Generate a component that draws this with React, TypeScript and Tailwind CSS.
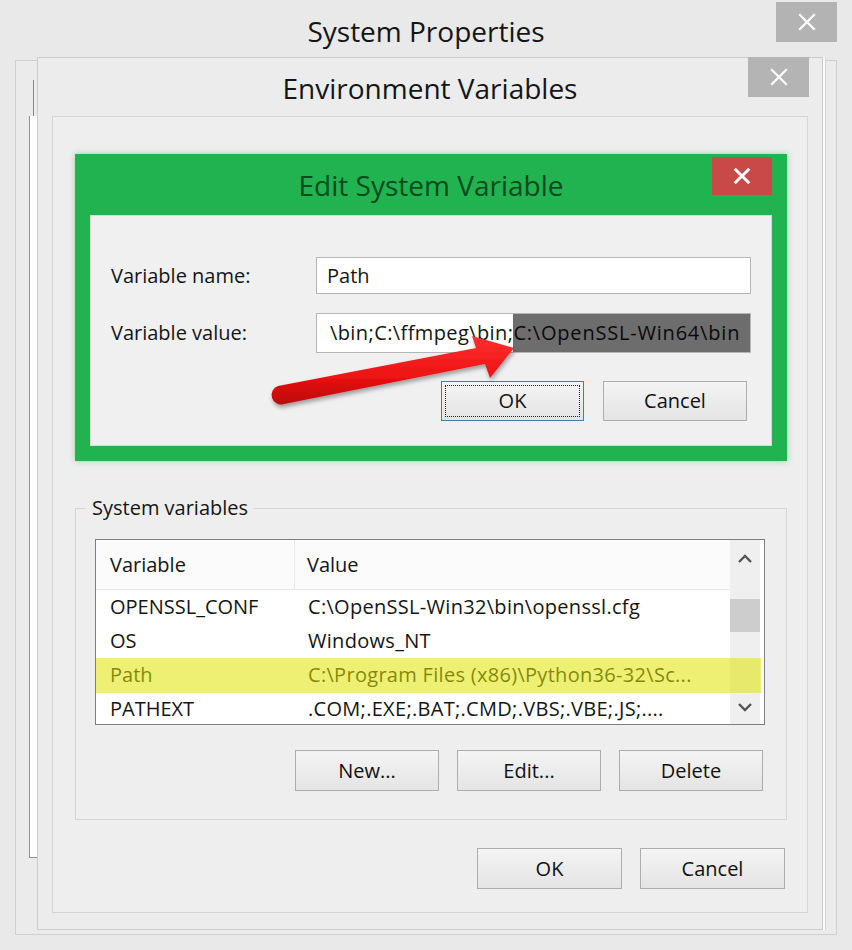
import React from 'react';

const FONT = "font-['Open_Sans','Noto_Sans',sans-serif]";

const CloseX: React.FC<{ size: number; stroke: number }> = ({ size, stroke }) => (
  <svg width={size} height={size} viewBox="0 0 20 20">
    <path d="M3 3 L17 17 M17 3 L3 17" stroke="#ffffff" strokeWidth={stroke} strokeLinecap="square" fill="none" />
  </svg>
);

const WinButton: React.FC<{ label: string; className?: string }> = ({ label, className = '' }) => (
  <div
    className={`flex items-center justify-center border border-[#adadad] bg-gradient-to-b from-[#f4f4f4] to-[#e4e4e4] text-[20px] text-[#111] ${className}`}
  >
    {label}
  </div>
);

const rows = [
  { name: 'OPENSSL_CONF', value: 'C:\\OpenSSL-Win32\\bin\\openssl.cfg' },
  { name: 'OS', value: 'Windows_NT' },
  { name: 'Path', value: 'C:\\Program Files (x86)\\Python36-32\\Sc...' },
  { name: 'PATHEXT', value: '.COM;.EXE;.BAT;.CMD;.VBS;.VBE;.JS;....' },
];

const EditDialog: React.FC = () => (
  <div className="relative w-[712px] h-[307px] bg-[#21b34f] flex flex-col px-[15px] pb-[15px] shadow-[0_0_6px_rgba(40,180,80,0.45)]">
    <div className="h-[61px] flex items-center justify-center text-[28px] text-[#0c4a20]">
      Edit System Variable
    </div>
    <div className="absolute right-[15px] top-[3px] w-[60px] h-[38px] bg-[#c94848] flex items-center justify-center">
      <CloseX size={18} stroke={3.2} />
    </div>
    <div className="flex-1 bg-[#f0f0f0] border border-[#d8d8d8] pl-[20px] pr-[20px] pt-[41px] flex flex-col">
      <div className="flex items-center h-[37px]">
        <div className="w-[205px] text-[20px]">Variable name:</div>
        <div className="flex-1 h-full bg-white border border-[#b5b5b5] flex items-center px-[10px] text-[20px]">
          Path
        </div>
      </div>
      <div className="flex items-center h-[40px] mt-[19px]">
        <div className="w-[205px] text-[20px]">Variable value:</div>
        <div className="flex-1 h-full bg-white border border-[#b5b5b5] flex overflow-hidden whitespace-nowrap text-[20px] pl-[13px]">
          <span className="self-center tracking-[0.4px]">\bin;C:\ffmpeg\bin;</span>
          <span className="flex-1 h-full bg-[#6d6d6d] text-[#0a0a0a] flex items-center tracking-[0.8px]">
            C:\OpenSSL-Win64\bin
          </span>
        </div>
      </div>
      <div className="flex justify-end gap-[19px] mt-[28px] mr-[4px]">
        <div className="w-[143px] h-[40px] border border-[#3d7fb5] bg-gradient-to-b from-[#f4f4f4] to-[#e4e4e4] p-[3px]">
          <div className="w-full h-full border border-dotted border-[#222] flex items-center justify-center text-[20px]">
            OK
          </div>
        </div>
        <WinButton label="Cancel" className="w-[144px] h-[40px]" />
      </div>
    </div>
  </div>
);

const SystemVariables: React.FC = () => (
  <div className="relative w-[712px] h-[312px] border border-[#d6d6d6] mt-[47px] flex flex-col">
    <div className="absolute left-[10px] top-[-15px] px-[6px] bg-[#eeeeee] text-[20px] leading-[28px]">
      System variables
    </div>
    <div className="relative ml-[19px] mt-[30px] w-[670px] h-[186px] border border-[#7f7f7f] bg-white flex overflow-hidden">
      <div className="flex-1 flex flex-col">
        <div className="h-[50px] flex border-b border-[#e6e6e6] bg-[#fbfbfb] text-[20px] shrink-0">
          <div className="w-[199px] border-r border-[#e6e6e6] pl-[14px] flex items-center">Variable</div>
          <div className="flex-1 pl-[12px] flex items-center">Value</div>
        </div>
        {rows.map((r) => (
          <div key={r.name} className="h-[34px] flex items-center text-[20px] whitespace-nowrap shrink-0">
            <div className="w-[199px] pl-[14px]">{r.name}</div>
            <div className="flex-1 pl-[13px] tracking-[0.3px]">{r.value}</div>
          </div>
        ))}
      </div>
      <div className="w-[30px] mr-[4px] bg-[#efefef] flex flex-col items-center">
        <svg className="mt-[14px]" width="16" height="10" viewBox="0 0 16 10">
          <path d="M2 8 L8 2 L14 8" stroke="#555" strokeWidth="2.4" fill="none" />
        </svg>
        <div className="mt-[35px] w-full h-[33px] bg-[#cdcdcd]" />
        <svg className="mt-[70px]" width="16" height="10" viewBox="0 0 16 10">
          <path d="M2 2 L8 8 L14 2" stroke="#555" strokeWidth="2.4" fill="none" />
        </svg>
      </div>
      {/* yellow marker over the Path row */}
      <div className="absolute left-0 top-[118px] w-[665px] h-[35px] bg-[#e0e400]/55" />
    </div>
    <div className="flex justify-end gap-[18px] mt-[25px] mr-[23px]">
      <WinButton label="New..." className="w-[144px] h-[41px]" />
      <WinButton label="Edit..." className="w-[144px] h-[41px]" />
      <WinButton label="Delete" className="w-[144px] h-[41px]" />
    </div>
  </div>
);

const App: React.FC = () => {
  return (
    <div className={`relative w-[852px] h-[950px] overflow-hidden bg-[#e9e9e9] text-[#151515] ${FONT}`}>
      {/* System Properties title bar */}
      <div className="relative h-[60px] flex justify-center">
        <div className="mt-[11px] text-[28px] leading-[40px]">System Properties</div>
        <div className="absolute right-[15px] top-[2px] w-[61px] h-[40px] bg-[#b3b3b3] flex items-center justify-center">
          <CloseX size={20} stroke={2.2} />
        </div>
      </div>

      {/* System Properties body (mostly hidden) */}
      <div className="ml-[15px] w-[822px] h-[875px] border border-[#cfcfcf] bg-[#ebebeb]">
        <div className="ml-[17px] mt-[19px] h-[36px] w-[1px] bg-[#858585]" />
        <div className="ml-[13px] h-[742px] w-[9px] bg-white border-l border-b border-[#8f8f8f]" />
      </div>

      {/* Environment Variables window */}
      <div className="absolute left-[37px] top-[57px] w-[786px] h-[873px] bg-[#ececec] border border-[#cbcbcb] flex flex-col shadow-[2px_0_0_#fafafa,3px_0_0_#d6d6d6]">
        <div className="relative h-[58px] flex justify-center shrink-0">
          <div className="mt-[10px] text-[28px] leading-[40px]">Environment Variables</div>
          <div className="absolute right-[13px] top-[-1px] w-[61px] h-[40px] bg-[#b4b4b4] flex items-center justify-center">
            <CloseX size={20} stroke={2.2} />
          </div>
        </div>
        <div className="flex-1 mx-[14px] mb-[16px] bg-[#eeeeee] border border-[#d6d6d6] flex flex-col pl-[22px] pt-[37px]">
          <EditDialog />
          <SystemVariables />
          <div className="flex justify-end gap-[18px] mt-[28px] mr-[22px]">
            <WinButton label="OK" className="w-[145px] h-[41px]" />
            <WinButton label="Cancel" className="w-[145px] h-[41px]" />
          </div>
        </div>
      </div>

      {/* red annotation arrow */}
      <svg className="absolute left-0 top-0 pointer-events-none" width="852" height="950" viewBox="0 0 852 950">
        <defs>
          <linearGradient id="arrowRed" x1="0" y1="0" x2="0" y2="1">
            <stop offset="0" stopColor="#ff3030" />
            <stop offset="0.6" stopColor="#ec1212" />
            <stop offset="1" stopColor="#b80808" />
          </linearGradient>
          <filter id="arrowShadow" x="-10%" y="-30%" width="120%" height="160%">
            <feDropShadow dx="1" dy="3" stdDeviation="2" floodColor="#000" floodOpacity="0.35" />
          </filter>
        </defs>
        <path
          d="M278 386 L476 348 L472 336 L514 348 L490 378 L485 364 L284 404 A9 9 0 0 1 278 386 Z"
          fill="url(#arrowRed)"
          filter="url(#arrowShadow)"
        />
      </svg>
    </div>
  );
};

export default App;
